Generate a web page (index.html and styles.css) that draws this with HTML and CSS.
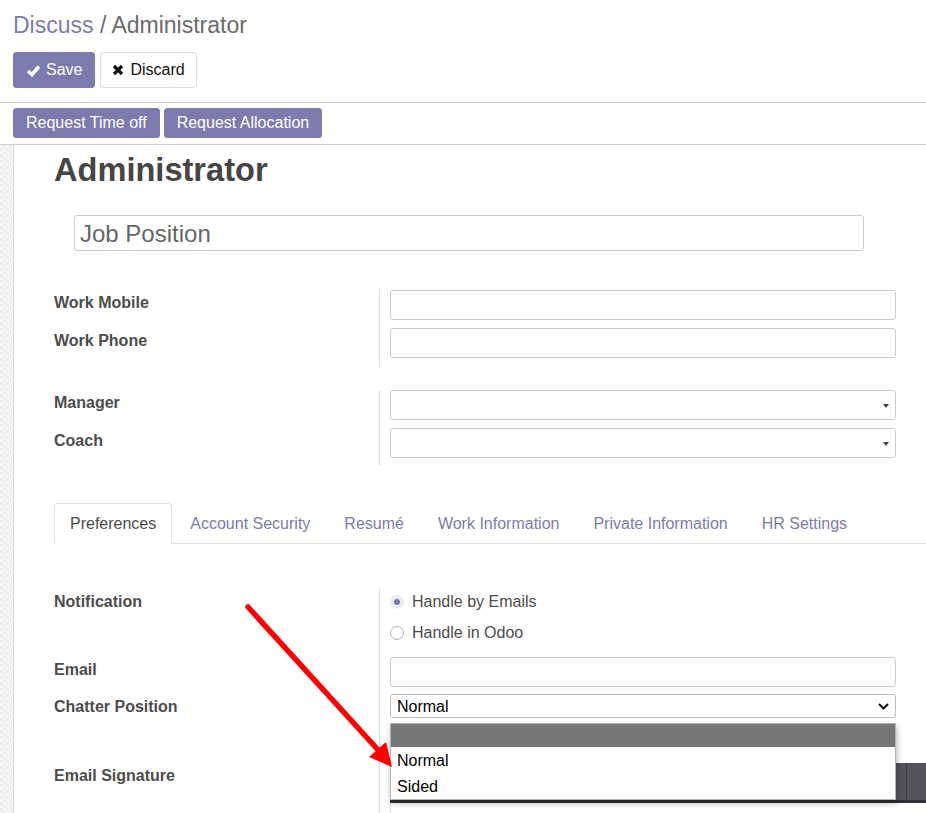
FILE: index.html
```html
<!DOCTYPE html>
<html>
<head>
<meta charset="utf-8">
<title>Administrator</title>
<link rel="stylesheet" href="styles.css">
</head>
<body>
<div class="page">
  <div class="control-panel">
    <div class="breadcrumb"><span class="bc-link">Discuss</span><span class="bc-cur"> / Administrator</span></div>
    <div class="cp-buttons">
      <button class="btn btn-primary btn-lg">
        <svg class="ico-check" width="15" height="13" viewBox="0 0 15 13"><polyline points="2,7 6,10.5 13,2.5" fill="none" stroke="#fff" stroke-width="3.6" stroke-linejoin="miter"/></svg>
        <span>Save</span>
      </button>
      <button class="btn btn-secondary btn-lg">
        <svg class="ico-x" width="12" height="12" viewBox="0 0 12 12"><path d="M2 2 L10 10 M10 2 L2 10" fill="none" stroke="#111" stroke-width="3.2"/></svg>
        <span>Discard</span>
      </button>
    </div>
  </div>

  <div class="statusbar">
    <button class="btn btn-primary btn-sm">Request Time off</button>
    <button class="btn btn-primary btn-sm">Request Allocation</button>
  </div>

  <div class="main">
    <div class="gutter"></div>
    <div class="sheet">
      <h1 class="title">Administrator</h1>
      <div class="input job">Job Position</div>

      <div class="group g-first">
        <div class="row">
          <div class="label">Work Mobile</div>
          <div class="value"><div class="input"></div></div>
        </div>
        <div class="row">
          <div class="label">Work Phone</div>
          <div class="value"><div class="input"></div></div>
        </div>
      </div>

      <div class="group g-second">
        <div class="row">
          <div class="label">Manager</div>
          <div class="value"><div class="input m2o"><span class="caret"></span></div></div>
        </div>
        <div class="row">
          <div class="label">Coach</div>
          <div class="value"><div class="input m2o"><span class="caret"></span></div></div>
        </div>
      </div>

      <div class="tabs">
        <div class="tab active">Preferences</div>
        <div class="tab">Account Security</div>
        <div class="tab">Resumé</div>
        <div class="tab">Work Information</div>
        <div class="tab">Private Information</div>
        <div class="tab">HR Settings</div>
      </div>

      <div class="group g-tab">
        <div class="row">
          <div class="label">Notification</div>
          <div class="value v-radio">
            <div class="radio-item"><span class="radio checked"><span class="dot"></span></span><span>Handle by Emails</span></div>
            <div class="radio-item"><span class="radio"></span><span>Handle in Odoo</span></div>
          </div>
        </div>
        <div class="row">
          <div class="label">Email</div>
          <div class="value v-email"><div class="input"></div></div>
        </div>
        <div class="row">
          <div class="label">Chatter Position</div>
          <div class="value v-chatter">
            <div class="select-wrap">
              <div class="select">
                <span>Normal</span>
                <svg width="11" height="7" viewBox="0 0 11 7"><polyline points="1,1 5.5,5.5 10,1" fill="none" stroke="#111" stroke-width="2"/></svg>
              </div>
              <div class="dropdown">
                <div class="opt opt-blank"></div>
                <div class="opt">Normal</div>
                <div class="opt">Sided</div>
              </div>
            </div>
          </div>
        </div>
        <div class="row">
          <div class="label">Email Signature</div>
          <div class="value v-sig">
            <div class="toolbar">
              <div class="tb-group"><span class="tb-btn w60"></span><span class="tb-btn w36"></span><span class="tb-btn w36"></span><span class="tb-btn w36"></span></div>
              <div class="tb-group"><span class="tb-btn w46"></span><span class="tb-btn w70"></span></div>
              <div class="tb-group"><span class="tb-btn w110"></span><span class="tb-btn w60"></span></div>
              <div class="tb-group"><span class="tb-btn w60"></span><span class="tb-btn w46"></span><span class="tb-btn w60"></span></div>
              <div class="tb-spacer"></div>
              <div class="tb-last"><span class="tb-chev"><svg width="8" height="5" viewBox="0 0 8 5"><polyline points="1,1 4,4 7,1" fill="none" stroke="#333" stroke-width="1.6"/></svg></span></div>
            </div>
            <div class="editor"></div>
          </div>
        </div>
      </div>
    </div>
  </div>

  <svg class="annotation" width="926" height="813" viewBox="0 0 926 813">
    <line x1="248" y1="607" x2="380" y2="752" stroke="#ff0000" stroke-width="5.5" stroke-linecap="round"/>
    <polygon points="392,767 369,757 386,742" fill="#ff0000"/>
  </svg>
</div>
</body>
</html>
```

FILE: styles.css
```css
* { box-sizing: border-box; }

html, body {
  margin: 0;
  padding: 0;
  background: #ffffff;
}

body {
  font-family: "Liberation Sans", Arial, sans-serif;
  font-size: 16px;
  color: #4c4c4c;
}

.page {
  position: relative;
  width: 926px;
  height: 813px;
  overflow: hidden;
}

/* control panel */
.control-panel {
  padding: 11px 13px 14px 13px;
  border-bottom: 1px solid #cfcfcf;
}

.breadcrumb {
  font-size: 23px;
  line-height: 28px;
  white-space: nowrap;
}

.bc-link { color: #7c7bad; }
.bc-cur { color: #6b6b6b; }

.cp-buttons {
  display: flex;
  gap: 5px;
  margin-top: 13px;
}

.btn {
  font-family: "Liberation Sans", Arial, sans-serif;
  font-size: 16px;
  border-radius: 3px;
  border: 1px solid transparent;
  display: flex;
  align-items: center;
  justify-content: center;
  margin: 0;
  padding-top: 1px;
  cursor: pointer;
}

.btn-lg {
  height: 36px;
  padding-left: 12px;
  padding-right: 12px;
  gap: 5px;
}

.btn-primary {
  background: #7c7bad;
  border-color: #7c7bad;
  color: #ffffff;
}

.btn-secondary {
  background: #ffffff;
  border-color: #dcdcdc;
  color: #111111;
  gap: 6px;
  padding-right: 11px;
  padding-left: 11px;
}

.statusbar {
  display: flex;
  gap: 4px;
  padding: 5px 13px 6px 13px;
  border-bottom: 1px solid #cfcfcf;
}

.btn-sm {
  height: 30px;
  padding-left: 12px;
  padding-right: 12px;
}

/* main */
.main {
  display: flex;
  height: 668px;
}

.gutter {
  width: 14px;
  flex: none;
  border-right: 1px solid #dcdcdc;
  background: repeating-conic-gradient(#ededed 0 25%, #f8f8f8 0 50%) 0 0 / 6px 6px;
}

.sheet {
  flex: 1;
  padding-left: 40px;
  min-width: 0;
}

.title {
  margin: 6px 0 0 0;
  font-size: 32.6px;
  line-height: 38px;
  font-weight: bold;
  color: #454545;
}

.input {
  height: 30px;
  border: 1px solid #cccccc;
  border-radius: 3px;
  background: #ffffff;
}

.job {
  height: 36px;
  margin: 26px 62px 0 20px;
  font-size: 24px;
  line-height: 34px;
  padding-left: 5px;
  padding-top: 1px;
  color: #666666;
}

.group { display: flex; flex-direction: column; }
.g-first { margin-top: 39px; }
.g-second { margin-top: 24px; }
.g-tab { margin-top: 45px; }

.row {
  display: grid;
  grid-template-columns: 325px 1fr;
}

.label {
  font-weight: bold;
  line-height: 23px;
  padding-top: 1px;
  color: #4c4c4c;
}

.value {
  border-left: 1px solid #dddddd;
  padding: 0 30px 8px 10px;
}

.m2o {
  position: relative;
}

.caret {
  position: absolute;
  right: 6px;
  top: 13px;
  width: 0;
  height: 0;
  border-left: 3.5px solid transparent;
  border-right: 3.5px solid transparent;
  border-top: 4px solid #444444;
}

/* tabs */
.tabs {
  display: flex;
  gap: 2px;
  margin-top: 37px;
  border-bottom: 1px solid #dee2e6;
}

.tab {
  padding: 1px 15px 0 15px;
  line-height: 38px;
  border: 1px solid transparent;
  border-radius: 4px 4px 0 0;
  margin-bottom: -1px;
  color: #7c7bad;
  white-space: nowrap;
}

.tab.active {
  color: #4c4c4c;
  background: #ffffff;
  border-color: #dee2e6 #dee2e6 #ffffff #dee2e6;
}

/* radios */
.v-radio { padding-top: 1px; padding-bottom: 5px; }

.radio-item {
  display: flex;
  align-items: center;
  gap: 8px;
  line-height: 24px;
  margin-bottom: 7px;
  color: #4c4c4c;
}

.radio {
  width: 14px;
  height: 14px;
  border-radius: 50%;
  border: 1px solid #adb5bd;
  background: #ffffff;
  display: flex;
  align-items: center;
  justify-content: center;
}

.radio.checked {
  border-color: #e9ecef;
  background: #e9ecef;
}

.dot {
  width: 6px;
  height: 6px;
  border-radius: 50%;
  background: #7c7bad;
}

.v-email { padding-bottom: 7px; }

/* select */
.v-chatter { padding-bottom: 45px; }

.select-wrap { position: relative; }

.select {
  height: 24px;
  border: 1px solid #bdbdbd;
  border-radius: 3px;
  display: flex;
  align-items: center;
  justify-content: space-between;
  padding: 1px 6px 0 6px;
  color: #000000;
}

.dropdown {
  position: absolute;
  z-index: 5;
  top: 29px;
  left: 0;
  right: 0;
  background: #ffffff;
  border: 1px solid #b5b5b5;
  box-shadow: 1px 3px 6px rgba(0, 0, 0, 0.3);
}

.opt {
  height: 26px;
  line-height: 25px;
  padding-top: 1px;
  padding-left: 6px;
  color: #000000;
}

.opt-blank {
  height: 23px;
  background: #767676;
}

/* signature editor */
.v-sig {
  padding-bottom: 0;
  padding-right: 0;
}

.toolbar {
  height: 40px;
  margin-right: -40px;
  background: #54545f;
  display: flex;
  align-items: stretch;
  border-bottom: 3px solid #303037;
}

.tb-group {
  display: flex;
  border-right: 1px solid #2c2c33;
}

.tb-btn {
  display: block;
  border-right: 1px solid #3a3a42;
}

.w36 { width: 36px; }
.w46 { width: 46px; }
.w60 { width: 60px; }
.w70 { width: 70px; }
.w110 { width: 110px; }

.tb-spacer { flex: 1; }

.tb-last {
  width: 31px;
  border-left: 2px solid #1f1f24;
  display: flex;
  align-items: center;
  padding-left: 11px;
}

.tb-chev {
  width: 16px;
  height: 15px;
  border-radius: 3px;
  background: #dcdcea;
  display: flex;
  align-items: center;
  justify-content: center;
}

.editor {
  height: 60px;
  border: 1px solid #dddddd;
  border-top: none;
}

/* annotation overlay */
.annotation {
  position: absolute;
  left: 0;
  top: 0;
  pointer-events: none;
  z-index: 10;
}
```
